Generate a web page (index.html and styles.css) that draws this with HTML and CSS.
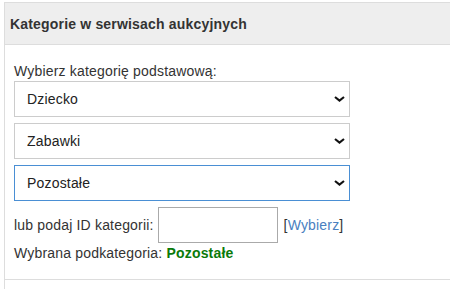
FILE: index.html
```html
<!DOCTYPE html>
<html lang="pl">
<head>
<meta charset="utf-8">
<title>Kategorie w serwisach aukcyjnych</title>
<link rel="stylesheet" href="styles.css">
</head>
<body>
<div class="panel">
  <div class="panel-heading">Kategorie w serwisach aukcyjnych</div>
  <div class="panel-body">
    <div class="label">Wybierz kategorię podstawową:</div>
    <div class="select-wrap">
      <select class="select"><option>Dziecko</option></select>
      <svg class="chev" viewBox="0 0 11 6" width="11" height="6"><path d="M1 1 L5.5 4.5 L10 1" fill="none" stroke="#111" stroke-width="2.2"/></svg>
    </div>
    <div class="select-wrap">
      <select class="select"><option>Zabawki</option></select>
      <svg class="chev" viewBox="0 0 11 6" width="11" height="6"><path d="M1 1 L5.5 4.5 L10 1" fill="none" stroke="#111" stroke-width="2.2"/></svg>
    </div>
    <div class="select-wrap">
      <select class="select select-focus"><option>Pozostałe</option></select>
      <svg class="chev" viewBox="0 0 11 6" width="11" height="6"><path d="M1 1 L5.5 4.5 L10 1" fill="none" stroke="#111" stroke-width="2.2"/></svg>
    </div>
    <div class="id-row">
      <span>lub podaj ID kategorii:</span>
      <input class="id-input" type="text">
      <span class="pick">[<a href="#" class="pick-link">Wybierz</a>]</span>
    </div>
    <div class="chosen">Wybrana podkategoria: <b class="chosen-val">Pozostałe</b></div>
  </div>
  <div class="panel-footer"></div>
</div>
</body>
</html>
```
FILE: styles.css
```css
html, body {
  margin: 0;
  padding: 0;
  background: #fff;
  overflow: hidden;
}
body {
  font-family: "Liberation Sans", Arial, sans-serif;
  font-size: 14px;
  letter-spacing: 0.18px;
  color: #333;
}
.panel {
  margin: 2px 0 0 4px;
  border: 1px solid #ddd;
  border-right: none;
  border-bottom: none;
}
.panel-heading {
  background: #eee;
  border-bottom: 1px solid #ddd;
  padding: 11px 5px 10px;
  line-height: 20px;
  font-weight: bold;
  color: #333;
}
.panel-body {
  padding: 17px 9px 16px;
}
.label {
  line-height: 19px;
}
.select-wrap {
  position: relative;
  width: 336px;
  margin-bottom: 6px;
}
.select {
  display: block;
  appearance: none;
  -webkit-appearance: none;
  width: 336px;
  height: 36px;
  margin: 0;
  border: 1px solid #ccc;
  border-radius: 0;
  background: #fff;
  padding: 0 12px;
  font-family: inherit;
  font-size: 14px;
  letter-spacing: 0.18px;
  color: #222;
  outline: none;
}
.select-focus {
  border-color: #4a8fd4;
}
.chev {
  position: absolute;
  right: 5px;
  top: 15px;
}
.id-row {
  display: flex;
  align-items: center;
  height: 36px;
}
.id-input {
  box-sizing: border-box;
  width: 120px;
  height: 36px;
  margin: 0 6px 0 4px;
  border: 1px solid #aaa;
  border-radius: 0;
  padding: 0 6px;
  font-family: inherit;
  font-size: 14px;
}
.pick-link {
  color: #4a80c0;
  text-decoration: none;
}
.chosen {
  margin-top: 1px;
  line-height: 19px;
}
.chosen-val {
  color: #0a7a0a;
}
.panel-footer {
  border-top: 1px solid #ddd;
  height: 20px;
}
```
